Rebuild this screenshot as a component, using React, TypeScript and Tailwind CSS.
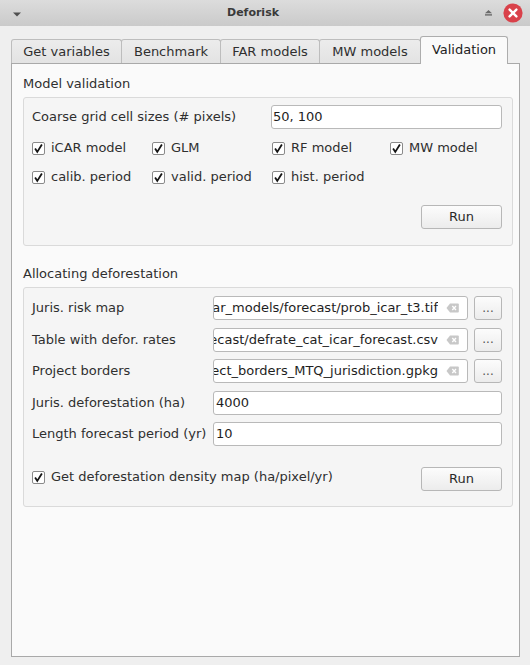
import React from 'react';

const tabs = [
  { name: 'Get variables', w: 'w-[111px]' },
  { name: 'Benchmark', w: 'w-[100px]' },
  { name: 'FAR models', w: 'w-[100px]' },
  { name: 'MW models', w: 'w-[102px]' },
];

function Check({ label }: { label: string }) {
  return (
    <label className="flex items-center gap-[6px] h-[20px] whitespace-nowrap">
      <span className="w-[13px] h-[13px] bg-white border border-[#8a8a8a] rounded-[2px] flex items-center justify-center shrink-0">
        <svg width="11" height="11" viewBox="0 0 11 11">
          <path d="M2.1 5.4 L4.3 8.9 L8.9 1.6" fill="none" stroke="#151515" strokeWidth="1.8" strokeLinejoin="miter" />
        </svg>
      </span>
      <span>{label}</span>
    </label>
  );
}

function Btn({ children, w }: { children: React.ReactNode; w: string }) {
  return (
    <button className={`${w} h-[24px] shrink-0 bg-gradient-to-b from-[#fcfcfc] to-[#ececec] border border-[#b7b7b7] rounded-[3px] text-[13px] text-[#2a2a2a] flex items-center justify-center`}>
      {children}
    </button>
  );
}

function ClearIcon() {
  return (
    <svg width="13" height="10" viewBox="0 0 13 10" className="shrink-0">
      <path d="M0.5 5 L4 0.5 H12 Q12.8 0.5 12.8 1.3 V8.7 Q12.8 9.5 12 9.5 H4 Z" fill="#c8c8c8" />
      <path d="M6.3 3 L10 7 M10 3 L6.3 7" stroke="#fff" strokeWidth="1.3" />
    </svg>
  );
}

// path fields show the tail of the path, scrolled to the end
function PathRow({ label, value }: { label: string; value: string }) {
  return (
    <div className="flex items-center h-[24px]">
      <span className="w-[181px] shrink-0">{label}</span>
      <div className="flex items-center w-[255px] h-[24px] bg-white border border-[#b9b9b9] rounded-[3px] pr-[8px]">
        <div className="flex-1 min-w-0 overflow-hidden flex justify-end whitespace-nowrap mr-[8px] text-[#1e1e1e]">
          <span className="shrink-0">{value}</span>
        </div>
        <ClearIcon />
      </div>
      <div className="ml-[6px]">
        <Btn w="w-[28px]"><span className="text-[#555] text-[12px] -mt-[1px]">...</span></Btn>
      </div>
    </div>
  );
}

function TextRow({ label, value }: { label: string; value: string }) {
  return (
    <div className="flex items-center h-[24px]">
      <span className="w-[181px] shrink-0 whitespace-nowrap">{label}</span>
      <div className="w-[290px] h-[24px] bg-white border border-[#b9b9b9] rounded-[3px] pl-[2px] flex items-center text-[#1e1e1e]">{value}</div>
    </div>
  );
}

export default function App() {
  return (
    <div className="w-[530px] h-[665px] bg-[#efefef] font-['DejaVu_Sans',sans-serif] text-[13px] text-[#2f2f2f] overflow-hidden">
      {/* title bar */}
      <div className="h-[26px] flex items-center pl-[13px] pr-[7px] bg-gradient-to-b from-[#dcdcdc] to-[#cacaca]">
        <svg width="8" height="5" viewBox="0 0 8 5" className="shrink-0 mt-[2px]">
          <path d="M0 0.5 H8 L4 4.5 Z" fill="#4f4f4f" />
        </svg>
        <div className="flex-1 text-center text-[11px] font-bold text-[#3a3a3a]">Deforisk</div>
        <svg width="7" height="6" viewBox="0 0 7 6" className="shrink-0">
          <path d="M0 3.2 L3.5 0 L7 3.2 Z" fill="#6a6a6a" />
          <rect x="0" y="4.2" width="7" height="1.4" fill="#6a6a6a" />
        </svg>
        <svg width="20" height="20" viewBox="0 0 20 20" className="shrink-0 ml-[11px]">
          <circle cx="10" cy="10" r="9.6" fill="#d9414a" />
          <path d="M6.6 6.6 L13.4 13.4 M13.4 6.6 L6.6 13.4" stroke="#fff" strokeWidth="2.4" strokeLinecap="round" />
        </svg>
      </div>

      <div className="pl-[11px] pt-[10px]">
        {/* tabs */}
        <div className="flex items-end h-[27px] relative z-10">
          {tabs.map((t, i) => (
            <div
              key={t.name}
              className={`${t.w} ${i > 0 ? '-ml-px' : ''} h-[24px] flex items-center justify-center border border-b-0 border-[#bdbdbd] rounded-t-[3px] bg-gradient-to-b from-[#ececec] to-[#e3e3e3] text-[#2f2f2f]`}
            >
              {t.name}
            </div>
          ))}
          <div className="w-[88px] -ml-px h-[28px] -mb-px flex items-center justify-center border border-b-0 border-[#adadad] rounded-t-[3px] bg-[#fafafa] text-[#222] pb-[1px]">
            Validation
          </div>
        </div>

        {/* panel */}
        <div className="w-[509px] h-[594px] border border-[#a9a9a9] bg-[#fafafa] pl-[11px] pr-[6px] pt-[12px]">
          <div className="h-[16px] leading-[16px]">Model validation</div>
          <div className="mt-[5px] border border-[#dadada] rounded-[3px] bg-[#f5f5f5] pl-[8px] pr-[10px] pt-[7px] pb-[16px]">
            <div className="flex items-center h-[24px]">
              <span className="flex-1">Coarse grid cell sizes (# pixels)</span>
              <div className="w-[231px] h-[24px] bg-white border border-[#b9b9b9] rounded-[3px] pl-[1px] flex items-center text-[#1e1e1e]">50, 100</div>
            </div>
            <div className="mt-[9px] grid grid-cols-[120px_120px_118px_1fr]">
              <Check label="iCAR model" />
              <Check label="GLM" />
              <Check label="RF model" />
              <Check label="MW model" />
            </div>
            <div className="mt-[9px] grid grid-cols-[120px_120px_118px_1fr]">
              <Check label="calib. period" />
              <Check label="valid. period" />
              <Check label="hist. period" />
            </div>
            <div className="mt-[18px] flex justify-end">
              <Btn w="w-[81px]">Run</Btn>
            </div>
          </div>

          <div className="mt-[20px] h-[16px] leading-[16px]">Allocating deforestation</div>
          <div className="mt-[5px] border border-[#dadada] rounded-[3px] bg-[#f5f5f5] pl-[8px] pr-[10px] pt-[8px] pb-[15px]">
            <div className="flex flex-col gap-[7.5px]">
              <PathRow label="Juris. risk map" value="ar_models/forecast/prob_icar_t3.tif" />
              <PathRow label="Table with defor. rates" value="ecast/defrate_cat_icar_forecast.csv" />
              <PathRow label="Project borders" value="ect_borders_MTQ_jurisdiction.gpkg" />
              <TextRow label="Juris. deforestation (ha)" value="4000" />
              <TextRow label="Length forecast period (yr)" value="10" />
            </div>
            <div className="mt-[21px] flex items-start justify-between">
              <Check label="Get deforestation density map (ha/pixel/yr)" />
              <Btn w="w-[81px]">Run</Btn>
            </div>
          </div>
        </div>
      </div>
    </div>
  );
}
